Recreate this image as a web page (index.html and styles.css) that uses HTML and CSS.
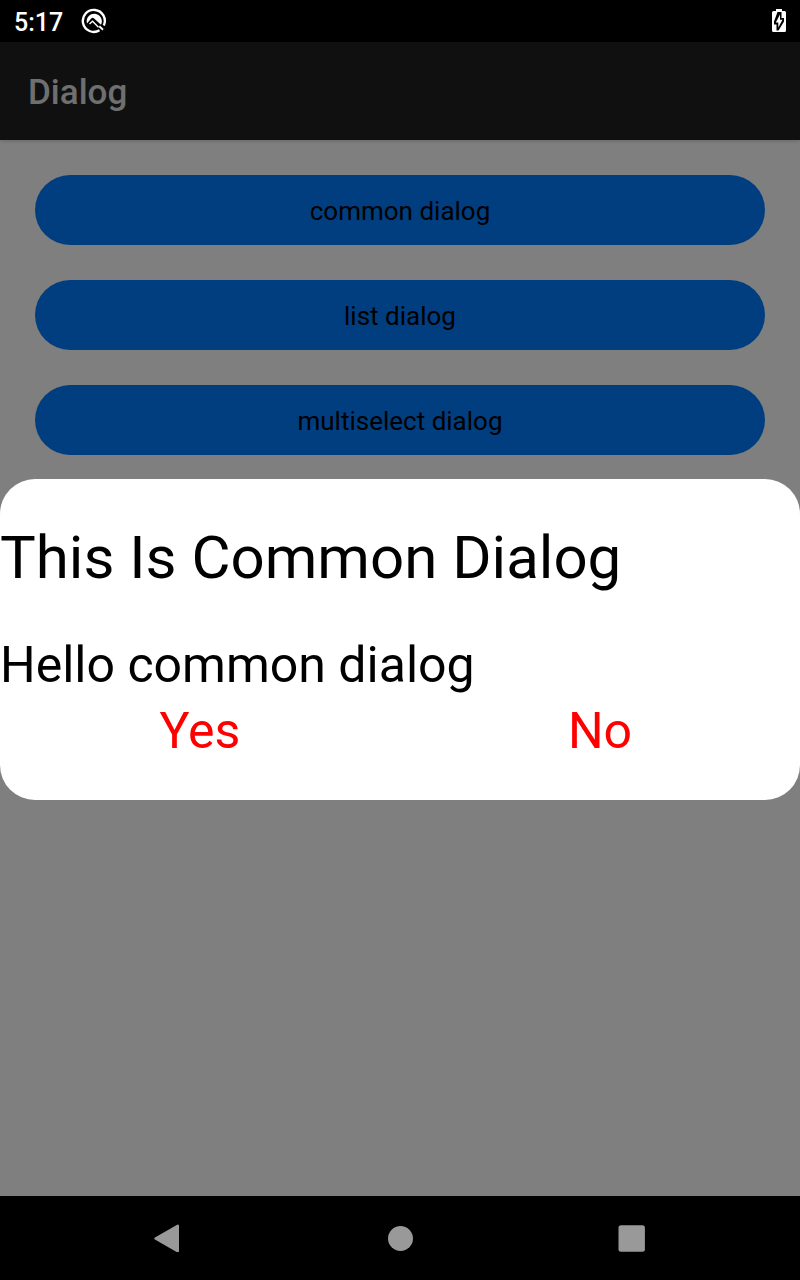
FILE: index.html
```html
<!DOCTYPE html>
<html lang="en">
<head>
<meta charset="utf-8">
<meta name="viewport" content="width=device-width, initial-scale=1">
<title>Dialog</title>
<link rel="stylesheet" href="styles.css">
</head>
<body>
<div class="screen">
  <div class="status-bar">
    <span class="clock">5:17</span>
    <svg class="status-icon" viewBox="0 0 26 26" aria-hidden="true">
      <path d="M18.500 22.300A11 11 0 1 1 22.800 17.500" fill="none" stroke="#fff" stroke-width="2.400"/>
      <path d="M6 15.500A7.600 7.600 0 1 1 20 16.800L12.800 10.200Q11.500 9.300 10.200 10.600Z" fill="#fff"/>
      <path d="M8.500 16L11.500 13.300L17.500 19.200" fill="none" stroke="#fff" stroke-width="1.400"/>
      <path d="M18.300 18.300L22 21.800" stroke="#fff" stroke-width="2"/>
    </svg>
    <svg class="battery" viewBox="0 0 14 24" aria-hidden="true">
      <path d="M4 0H10V2H12.500Q14 2 14 3.500V21.500Q14 23 12.500 23H1.500Q0 23 0 21.500V3.500Q0 2 1.500 2H4Z" fill="#fff"/>
      <path d="M9.500 3H5.500L2 12.500V15.500H4.500V21.500H6.500L12 12.500V9H9.500Z" fill="#000"/>
      <path d="M8 5.500L3.800 13.500H6.300V18.500L10.500 10.800H8Z" fill="#fff"/>
    </svg>
  </div>
  <header class="app-bar"><h1 class="app-title">Dialog</h1></header>
  <main class="content">
    <button class="pill" type="button">common dialog</button>
    <button class="pill" type="button">list dialog</button>
    <button class="pill" type="button">multiselect dialog</button>
  </main>
  <nav class="nav-bar" aria-label="System">
    <button class="nav-button" type="button" aria-label="Back">
      <svg class="nav-icon" viewBox="0 0 28 28" aria-hidden="true"><path d="M1.500 14.500L23.800 1.700V27.300Z" fill="#999" stroke="#999" stroke-width="2.400" stroke-linejoin="round"/></svg>
    </button>
    <button class="nav-button" type="button" aria-label="Home">
      <svg class="nav-icon" viewBox="0 0 28 28" aria-hidden="true"><circle cx="14.500" cy="14.500" r="12.500" fill="#999"/></svg>
    </button>
    <button class="nav-button" type="button" aria-label="Recent apps">
      <svg class="nav-icon" viewBox="0 0 28 28" aria-hidden="true"><rect x="0.500" y="1.300" width="26.400" height="26.400" rx="2.500" fill="#999"/></svg>
    </button>
  </nav>
  <div class="scrim">
    <section class="dialog" role="dialog" aria-modal="true" aria-labelledby="dialog-title">
      <h2 class="dialog-title" id="dialog-title">This Is Common Dialog</h2>
      <p class="dialog-text">Hello common dialog</p>
      <div class="actions">
        <button class="action" type="button">Yes</button>
        <button class="action" type="button">No</button>
      </div>
    </section>
  </div>
</div>
</body>
</html>
```
FILE: styles.css
```css
* {
  box-sizing: border-box;
}

body {
  margin: 0;
  background: #fff;
  font-family: Roboto, "Liberation Sans", sans-serif;
}

h1, h2, p {
  margin: 0;
}

button {
  border: 0;
  padding: 0;
  font-family: inherit;
}

.screen {
  display: flex;
  flex-direction: column;
  min-height: 100vh;
}

.status-bar {
  display: flex;
  align-items: center;
  height: 42px;
  padding: 0 14px;
  background: #000;
  color: #fff;
  position: relative;
  z-index: 2;
}

.clock {
  padding-top: 4px;
  font-size: 25px;
  font-weight: 500;
  line-height: 40px;
}

.status-icon {
  width: 26px;
  height: 26px;
  margin-left: 18px;
}

.battery {
  width: 14px;
  height: 24px;
  margin-left: auto;
}

.app-bar {
  display: flex;
  align-items: center;
  height: 98px;
  padding: 2px 28px 0;
  background: #212121;
  box-shadow: 0 1px 4px rgba(0, 0, 0, 0.2);
}

.app-title {
  color: #dedede;
  font-size: 35px;
  font-weight: 500;
}

.content {
  flex: 1;
  display: flex;
  flex-direction: column;
  gap: 35px;
  padding: 35px;
}

.pill {
  height: 70px;
  padding-top: 2px;
  border-radius: 35px;
  background: #007dff;
  color: #000;
  font-size: 26px;
}

.scrim {
  position: fixed;
  inset: 0;
  z-index: 1;
  display: flex;
  align-items: center;
  padding-bottom: 1px;
  background: rgba(0, 0, 0, 0.5);
}

.dialog {
  width: 100%;
  padding: 43px 0 36px;
  border-radius: 35px;
  background: #fff;
  color: #000;
}

.dialog-title {
  margin-bottom: 38px;
  font-size: 60px;
  font-weight: 400;
  line-height: 72px;
}

.dialog-text {
  font-size: 50px;
  line-height: 66px;
}

.actions {
  display: flex;
}

.action {
  flex: 1;
  background: none;
  color: #f00;
  font-size: 50px;
  line-height: 66px;
}

.nav-bar {
  display: flex;
  justify-content: center;
  height: 84px;
  background: #000;
  position: relative;
  z-index: 2;
}

.nav-button {
  display: flex;
  align-items: center;
  justify-content: center;
  width: 232px;
  background: none;
}

.nav-icon {
  width: 28px;
  height: 28px;
}
```
